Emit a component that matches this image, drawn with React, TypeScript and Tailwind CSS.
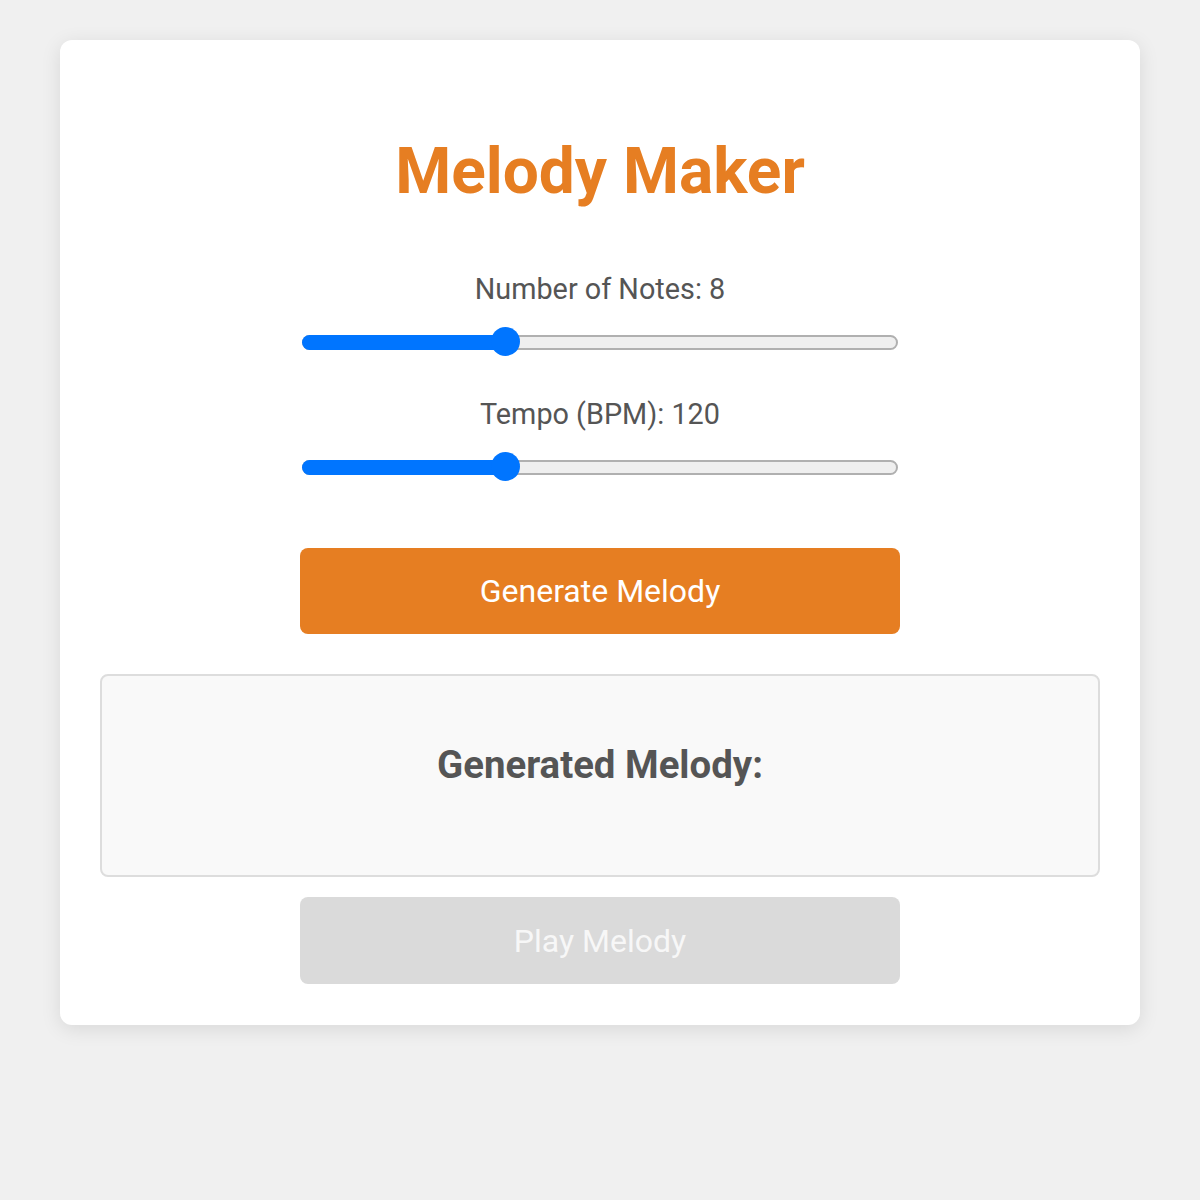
import { useState } from 'react'

interface RangeProps {
  label: string
  value: number
  min: number
  max: number
}

const THUMB = 29

function RangeSlider({ label, value, min, max }: RangeProps) {
  const pct = (value - min) / (max - min)
  const thumbLeft = `calc(${pct} * (100% - ${THUMB}px))`
  const fillWidth = `calc(${pct} * (100% - ${THUMB}px) + ${THUMB / 2}px)`

  return (
    <div className="flex flex-col items-center">
      <div className="text-[28.8px] leading-[33px] text-[#555]">
        {label}: {value}
      </div>
      <div className="relative mt-[21px] flex h-[30px] w-[596px] items-center">
        <div className="relative h-[15px] w-full rounded-full border-2 border-[#b0b0b0] bg-[#efefef]">
          <div
            className="absolute -left-[2px] -top-[2px] -bottom-[2px] rounded-l-full bg-[#0075ff]"
            style={{ width: fillWidth }}
          />
        </div>
        <div
          className="absolute top-0 h-[29px] w-[29px] rounded-full bg-[#0075ff]"
          style={{ left: thumbLeft }}
        />
      </div>
    </div>
  )
}

export default function App() {
  const [notes] = useState(8)
  const [tempo] = useState(120)

  return (
    <div className="min-h-[1200px] bg-[#f0f0f0] pt-10 font-['Roboto',sans-serif]">
      <div className="mx-auto w-[1080px] rounded-xl bg-white px-10 pt-10 pb-[41px] shadow-[0_4px_20px_rgba(0,0,0,0.1)]">
        <h1 className="mt-[54px] text-center text-[64px] font-bold leading-[75px] text-[#e67e22]">
          Melody Maker
        </h1>

        <div className="mt-[64px]">
          <RangeSlider label="Number of Notes" value={notes} min={4} max={16} />
        </div>
        <div className="mt-[41px]">
          <RangeSlider label="Tempo (BPM)" value={tempo} min={60} max={240} />
        </div>

        <button className="mx-auto mt-[66px] flex h-[86px] w-[600px] items-center justify-center rounded-lg bg-[#e67e22] text-[32px] text-white">
          Generate Melody
        </button>

        <div className="mt-[40px] h-[203px] rounded-lg border-2 border-[#ddd] bg-[#f9f9f9] pt-[66px] text-center">
          <h3 className="text-[38.4px] font-bold leading-[45px] text-[#555]">Generated Melody:</h3>
        </div>

        <button
          disabled
          className="mx-auto mt-[20px] flex h-[87px] w-[600px] items-center justify-center rounded-lg bg-[#dadada] text-[32px] text-[#f7f7f7]"
        >
          Play Melody
        </button>
      </div>
    </div>
  )
}
